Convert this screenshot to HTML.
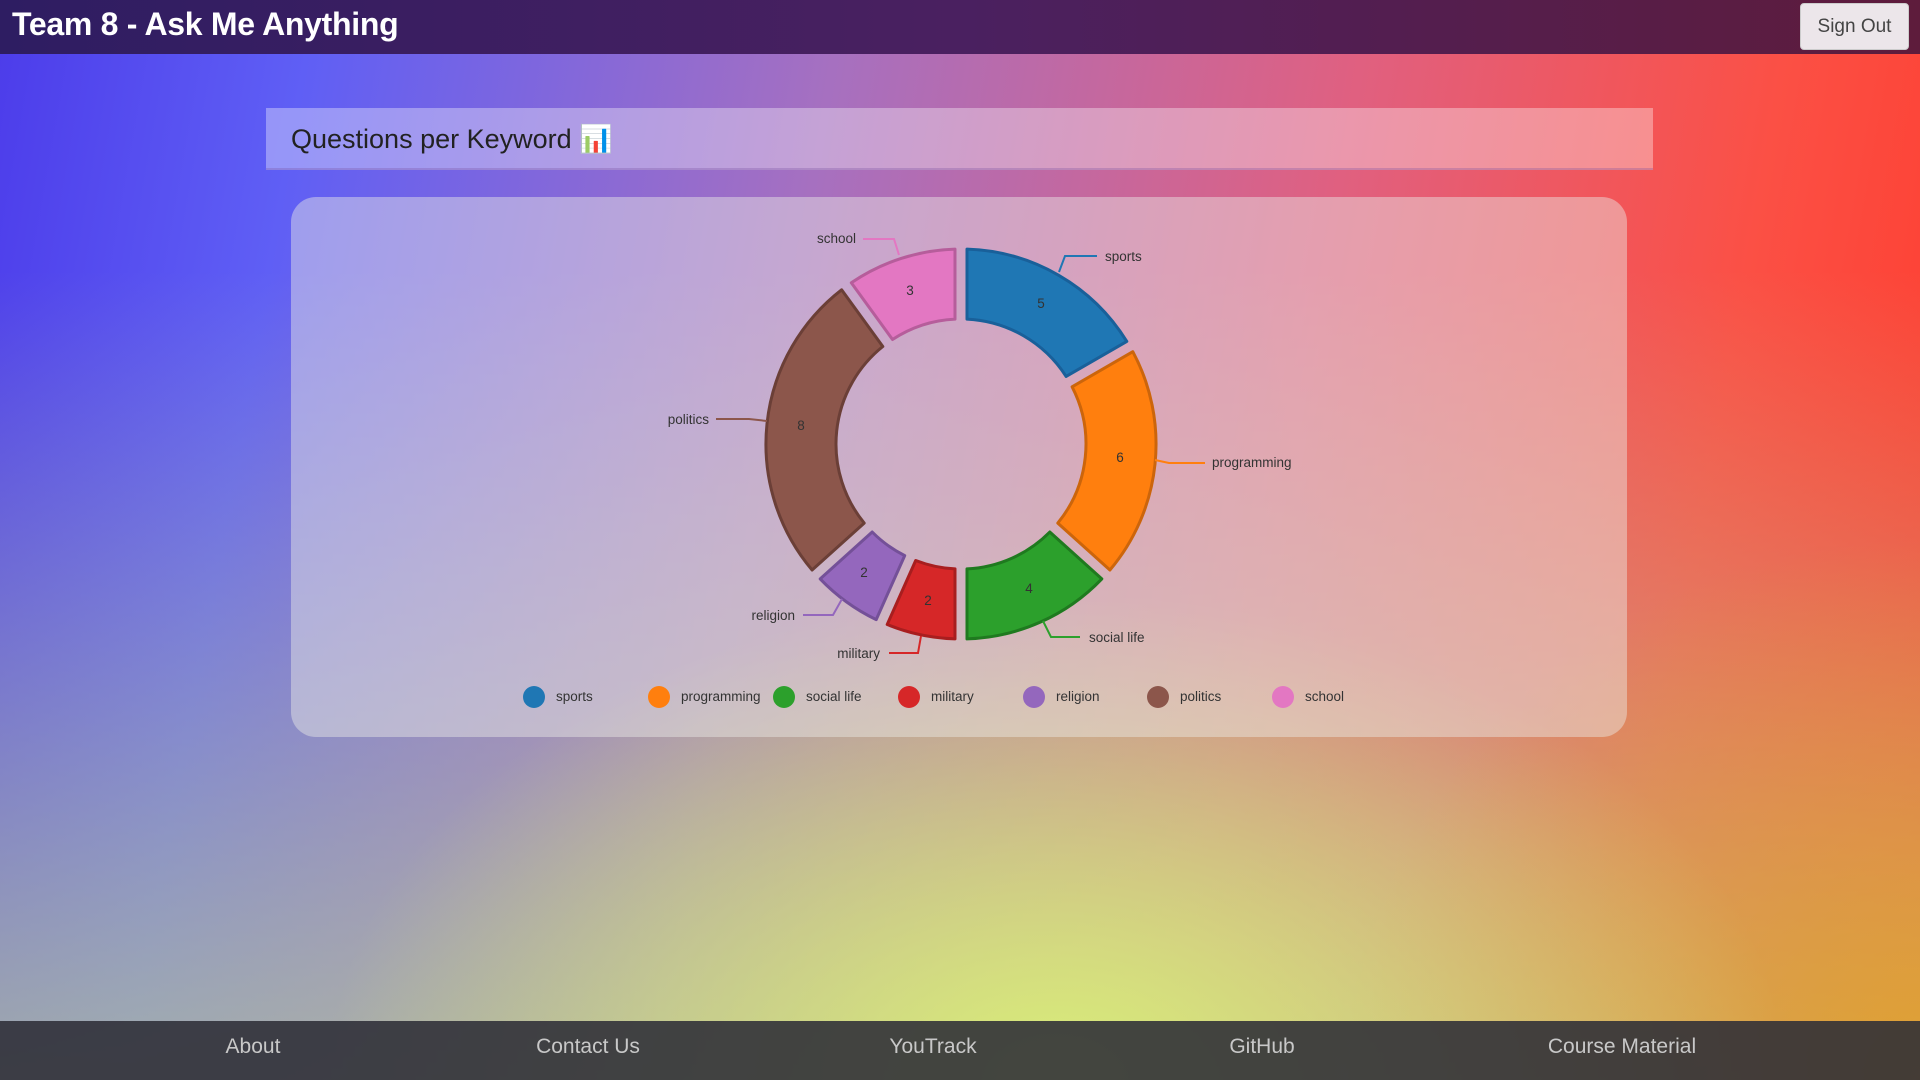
<!DOCTYPE html>
<html><head><meta charset="utf-8"><style>
html,body{margin:0;padding:0;width:1920px;height:1080px;overflow:hidden;font-family:"Liberation Sans",sans-serif}
body{position:relative;background:
radial-gradient(ellipse 38% 45% at 55% 100%, rgba(218,238,120,1), rgba(218,238,120,0) 100%),
radial-gradient(ellipse 30% 50% at 100% 100%, rgba(226,160,40,.9), rgba(226,160,40,0) 100%),
linear-gradient(to bottom, rgba(180,195,160,0) 25%, rgba(185,200,150,.75) 100%),
linear-gradient(100deg,#4c3cea 0%,#5f5ff5 15%,#a670c0 40%,#e06080 65%,#fb5045 85%,#ff3a2c 100%);}
.hdr{position:absolute;left:0;top:0;width:1920px;height:54px;background:linear-gradient(90deg,#2e1d62,#4a2060 50%,#5e1c3c)}
.hdr h1{margin:0;position:absolute;left:12px;top:6px;font:bold 32px "Gill Sans","Liberation Sans",sans-serif;color:#fff;letter-spacing:-0.3px}
.btn{position:absolute;left:1800px;top:3px;width:107px;height:45px;background:#ece6ea;border:1px solid #ccc;border-radius:4px;font-size:19px;color:#444;text-align:center;line-height:45px}
.title{position:absolute;left:266px;top:108px;width:1387px;height:62px;background:rgba(255,255,255,.35);border-bottom:2px solid rgba(120,80,160,.3);box-sizing:border-box}
.title span{position:absolute;left:25px;top:15px;font-size:27px;color:#222}
.card{position:absolute;left:291px;top:197px;width:1336px;height:540px;background:rgba(235,235,230,.45);border-radius:25px}
.foot{position:absolute;left:0;top:1021px;width:1920px;height:59px;background:rgba(45,45,55,.88)}
.foot span{position:absolute;top:14px;font-size:21px;color:#c8c8c8;transform:translateX(-50%)}
svg{position:absolute;left:0;top:0}
svg text{font-family:"Liberation Sans",sans-serif;font-size:13.5px;fill:#333}
</style></head><body>
<div class="hdr"><h1>Team 8 - Ask Me Anything</h1><div class="btn">Sign Out</div></div>
<div class="title"><span>Questions per Keyword 📊</span></div>
<div class="card"></div>
<svg width="1920" height="1080" id="s">
<g id="arcs"></g>
<g fill="none" stroke-width="2">
<polyline points="1059,272 1065,256 1097,256" stroke="#1f77b4"/>
<polyline points="1155,460 1169,463 1205,463" stroke="#ff7f0e"/>
<polyline points="1043,621 1051,637 1080,637" stroke="#2ca02c"/>
<polyline points="921,636 918,653 889,653" stroke="#d62728"/>
<polyline points="842,599 833,615 803,615" stroke="#9467bd"/>
<polyline points="767,421 749,419 716,419" stroke="#8c564b"/>
<polyline points="899,255 894,239 863,239" stroke="#e377c2"/>
</g>
<text x="1105" y="261">sports</text>
<text x="1212" y="467">programming</text>
<text x="1089" y="642">social life</text>
<text x="880" y="658" text-anchor="end">military</text>
<text x="795" y="620" text-anchor="end">religion</text>
<text x="709" y="424" text-anchor="end">politics</text>
<text x="856" y="243" text-anchor="end">school</text>
<g text-anchor="middle" style="font-size:14px">
<text x="1041" y="308">5</text>
<text x="1120" y="462">6</text>
<text x="1029" y="593">4</text>
<text x="928" y="605">2</text>
<text x="864" y="577">2</text>
<text x="801" y="430">8</text>
<text x="910" y="295">3</text>
</g>
<g>
<circle cx="534" cy="697" r="11" fill="#1f77b4"/><text x="556" y="701">sports</text>
<circle cx="659" cy="697" r="11" fill="#ff7f0e"/><text x="681" y="701">programming</text>
<circle cx="784" cy="697" r="11" fill="#2ca02c"/><text x="806" y="701">social life</text>
<circle cx="909" cy="697" r="11" fill="#d62728"/><text x="931" y="701">military</text>
<circle cx="1034" cy="697" r="11" fill="#9467bd"/><text x="1056" y="701">religion</text>
<circle cx="1158" cy="697" r="11" fill="#8c564b"/><text x="1180" y="701">politics</text>
<circle cx="1283" cy="697" r="11" fill="#e377c2"/><text x="1305" y="701">school</text>
</g>
</svg>
<div class="foot"><span style="left:253px">About</span><span style="left:588px">Contact Us</span><span style="left:933px">YouTrack</span><span style="left:1262px">GitHub</span><span style="left:1622px">Course Material</span></div>
<script>
var cx=961,cy=444,R=195,r=125;
var d=[[5,"#1f77b4","#19609a"],[6,"#ff7f0e","#cc650b"],[4,"#2ca02c","#1f7a1f"],[2,"#d62728","#a81e1f"],[2,"#9467bd","#745098"],[8,"#8c564b","#6b3f37"],[3,"#e377c2","#b65d9b"]];
var a=0,h="";
function p(rad,ang){return (cx+rad*Math.sin(ang)).toFixed(1)+","+(cy-rad*Math.cos(ang)).toFixed(1);}
d.forEach(function(e){var a0=a*Math.PI/15,a1=(a+e[0])*Math.PI/15;a+=e[0];
var po=6/R,pi=6/r;var lg=(a1-a0)>Math.PI?1:0;
h+='<path d="M'+p(R,a0+po)+' A'+R+','+R+' 0 '+lg+' 1 '+p(R,a1-po)+' L'+p(r,a1-pi)+' A'+r+','+r+' 0 '+lg+' 0 '+p(r,a0+pi)+' Z" fill="'+e[1]+'" stroke="'+e[2]+'" stroke-width="3" stroke-linejoin="round"/>';});
document.getElementById("arcs").innerHTML=h;
</script>
</body></html>
